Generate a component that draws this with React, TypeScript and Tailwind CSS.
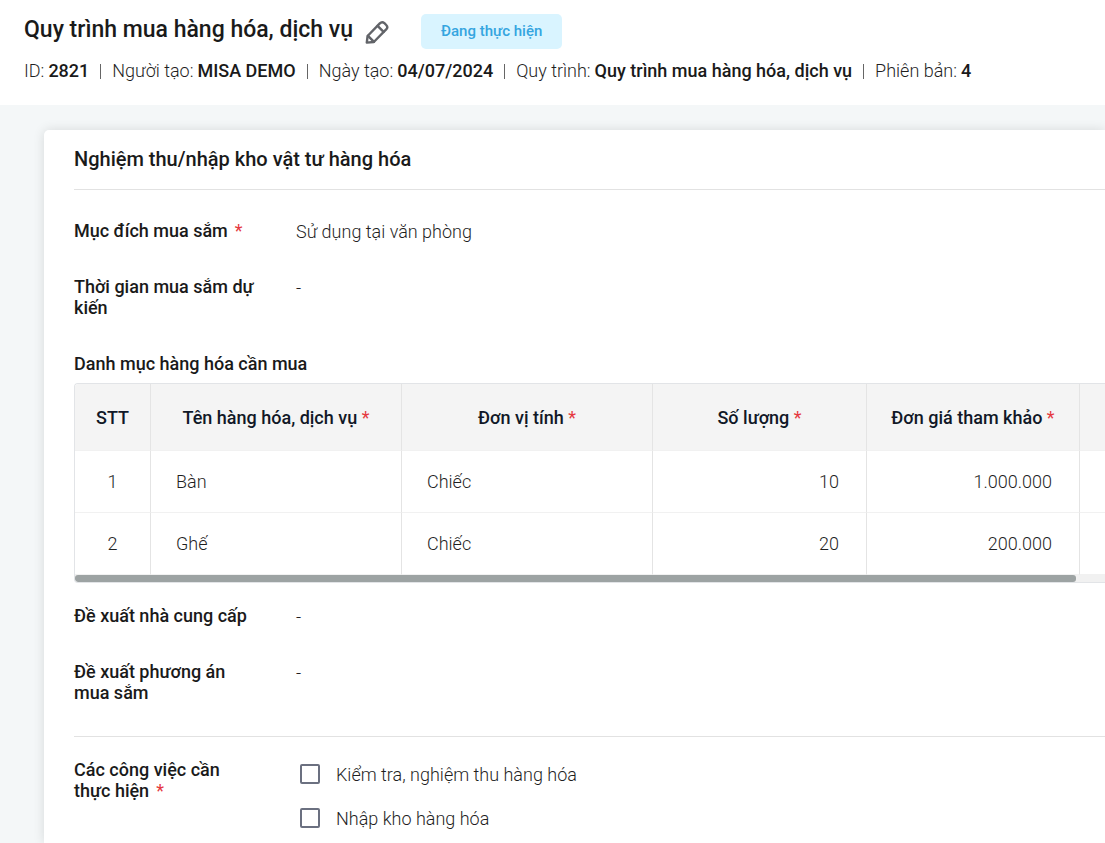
import React from "react";

function Required() {
  return <span className="font-normal text-[#e5393f]">*</span>;
}

function Meta({ label, value }: { label: string; value: string }) {
  return (
    <li className="flex items-center gap-1 whitespace-nowrap">
      <span>{label}</span>
      <strong className="font-medium text-[#1a1a1a]">{value}</strong>
    </li>
  );
}

function Divider() {
  return <li aria-hidden="true" className="h-[15px] w-px bg-[#666]" />;
}

function Field({ label, required, value }: { label: string; required?: boolean; value: string }) {
  return (
    <div className="flex">
      <dt className="w-[186px] shrink-0 leading-[21px] font-medium text-[#1a1a1a]">
        {label}
        {required && <span className="ml-[7px]"><Required /></span>}
      </dt>
      <dd className="ml-9 leading-6">{value}</dd>
    </div>
  );
}

function Task({ id, label }: { id: string; label: string }) {
  return (
    <div className="flex h-6 items-center gap-4">
      <input
        id={id}
        type="checkbox"
        className="size-5 shrink-0 appearance-none rounded-[2px] border-2 border-[#6b7080] bg-white checked:bg-[#6b7080]"
      />
      <label htmlFor={id}>{label}</label>
    </div>
  );
}

const columns = ["Tên hàng hóa, dịch vụ", "Đơn vị tính", "Số lượng", "Đơn giá tham khảo"];

const rows = [
  { no: 1, name: "Bàn", unit: "Chiếc", quantity: "10", price: "1.000.000" },
  { no: 2, name: "Ghế", unit: "Chiếc", quantity: "20", price: "200.000" },
];

const meta = [
  ["ID:", "2821"],
  ["Người tạo:", "MISA DEMO"],
  ["Ngày tạo:", "04/07/2024"],
  ["Quy trình:", "Quy trình mua hàng hóa, dịch vụ"],
  ["Phiên bản:", "4"],
];

export default function App() {
  return (
    <div className="flex h-screen flex-col overflow-hidden bg-[#f4f7f8] font-['Roboto','Liberation_Sans',sans-serif] text-[18px] font-light text-[#1f1f1f]">
      <header className="h-[105px] shrink-0 bg-white px-6 pt-[14px]">
        <div className="flex h-[35px] items-center">
          <h1 className="pb-[3px] text-[23px] leading-8 font-medium whitespace-nowrap text-[#1a1a1a]">
            Quy trình mua hàng hóa, dịch vụ
          </h1>
          <button type="button" aria-label="Chỉnh sửa" className="ml-3 text-[#626469]">
            <svg viewBox="0 0 24 24" className="size-6" fill="none" stroke="currentColor" strokeWidth="2.4" strokeLinejoin="round" strokeLinecap="round">
              <path d="M1.8 22.6 2.6 16 14.8 3.4Q17 1.2 19.4 3.2L21.2 5Q23.4 7.2 21.2 9.4L8.8 22Z" />
              <path d="M12.6 5.8 18.6 11.8M3 15.8 9 21.8" />
            </svg>
          </button>
          <span className="ml-8 flex h-[35px] items-center rounded-[5px] bg-[#d9f4ff] px-5 text-[15px] font-medium whitespace-nowrap text-[#35a5e0]">
            Đang thực hiện
          </span>
        </div>
        <ul className="mt-[11px] flex items-center gap-[11px] leading-[22px]">
          {meta.map(([label, value], i) => (
            <React.Fragment key={label}>
              {i > 0 && <Divider />}
              <Meta label={label} value={value} />
            </React.Fragment>
          ))}
        </ul>
      </header>

      <main className="min-h-0 flex-1 overflow-hidden pt-[25px] pl-11">
        <section className="min-h-full rounded-tl-[5px] bg-white pl-[30px] shadow-[0_0_12px_rgba(0,0,0,0.12)]">
          <h2 className="flex h-[60px] items-center border-b border-[#e2e2e2] pb-[2px] text-[20px] font-medium text-[#1a1a1a]">
            Nghiệm thu/nhập kho vật tư hàng hóa
          </h2>

          <dl className="flex flex-col gap-8 pt-[30px]">
            <Field label="Mục đích mua sắm" required value="Sử dụng tại văn phòng" />
            <Field label="Thời gian mua sắm dự kiến" value="-" />
          </dl>

          <h3 className="mt-[35px] leading-[21px] font-medium text-[#1a1a1a]">Danh mục hàng hóa cần mua</h3>
          <div className="mt-[9px] overflow-hidden rounded-l-[4px] border border-r-0 border-[#e2e4e7]">
            <table className="w-full table-fixed border-separate border-spacing-0">
              <colgroup>
                <col className="w-[76px]" />
                <col className="w-[251px]" />
                <col className="w-[251px]" />
                <col className="w-[214px]" />
                <col className="w-[213px]" />
                <col />
              </colgroup>
              <thead>
                <tr className="h-[67px] bg-[#f4f4f4] text-[#111827] *:border-b *:border-b-[#f1f1f1]">
                  <th className="border-r border-r-[#e4e4e4] font-medium">STT</th>
                  {columns.map((title) => (
                    <th key={title} className="border-r border-r-[#e4e4e4] font-medium whitespace-nowrap">
                      {title} <Required />
                    </th>
                  ))}
                  <td />
                </tr>
              </thead>
              <tbody>
                {rows.map((row) => (
                  <tr key={row.no} className="h-[62px] *:border-b *:border-b-[#f1f1f1]">
                    <td className="border-r border-r-[#e4e4e4] text-center">{row.no}</td>
                    <td className="border-r border-r-[#e4e4e4] px-[25px]">{row.name}</td>
                    <td className="border-r border-r-[#e4e4e4] px-[25px]">{row.unit}</td>
                    <td className="border-r border-r-[#e4e4e4] px-[27px] text-right">{row.quantity}</td>
                    <td className="border-r border-r-[#e4e4e4] px-[27px] text-right">{row.price}</td>
                    <td />
                  </tr>
                ))}
              </tbody>
            </table>
            <div className="bg-[#f1f1f1] pr-[29px]">
              <div className="h-[7px] rounded-[3px] bg-[#9da3a3]" />
            </div>
          </div>

          <dl className="flex flex-col gap-8 pt-[22px] pb-[33px]">
            <Field label="Đề xuất nhà cung cấp" value="-" />
            <Field label="Đề xuất phương án mua sắm" value="-" />
          </dl>

          <div role="group" aria-labelledby="tasks" className="flex border-t border-[#e2e2e2] pt-[22px]">
            <div id="tasks" className="w-[186px] shrink-0 pr-4 leading-[21px] font-medium text-[#1a1a1a]">
              Các công việc cần thực hiện<span className="ml-[7px]"><Required /></span>
            </div>
            <div className="ml-10 flex flex-col gap-5 pt-[3px]">
              <Task id="inspect" label="Kiểm tra, nghiệm thu hàng hóa" />
              <Task id="stock" label="Nhập kho hàng hóa" />
            </div>
          </div>
        </section>
      </main>
    </div>
  );
}
